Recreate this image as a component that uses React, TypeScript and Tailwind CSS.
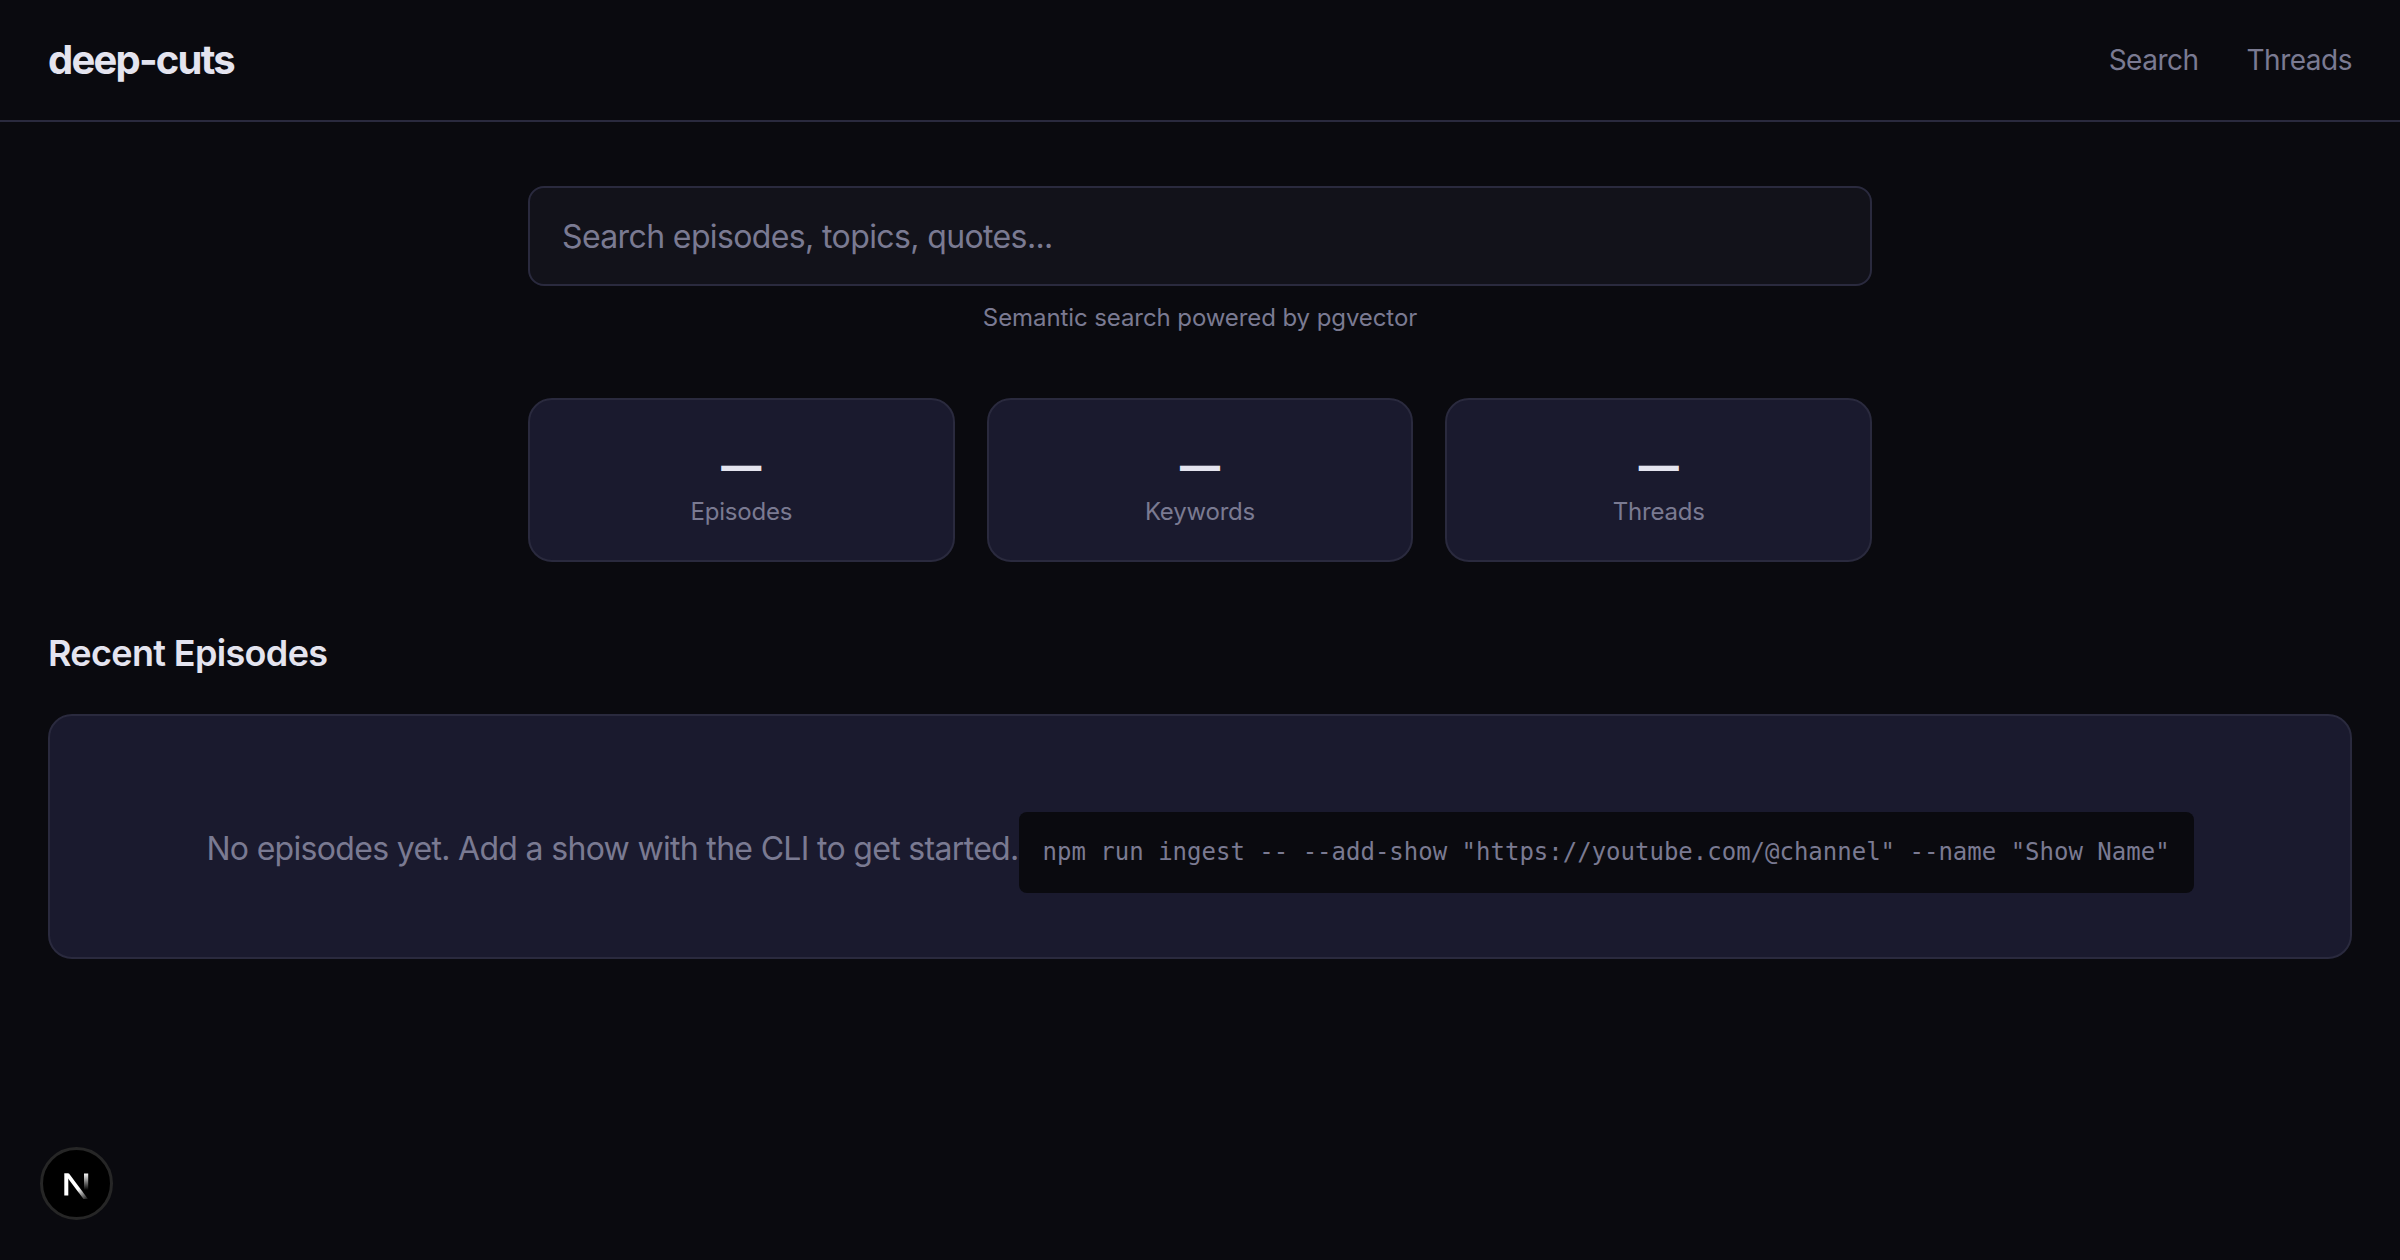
import React from 'react';

const stats = ['Episodes', 'Keywords', 'Threads'];

const NextBadge = () => (
  <div className="fixed left-[40px] bottom-[40px] flex h-[73px] w-[73px] items-center justify-center rounded-full border-[3px] border-[#262626] bg-black">
    <svg width="30" height="30" viewBox="0 0 30 30" fill="none">
      <defs>
        <linearGradient id="nDiag" x1="8" y1="8" x2="26" y2="31" gradientUnits="userSpaceOnUse">
          <stop offset="0.5" stopColor="#fff" />
          <stop offset="1" stopColor="#fff" stopOpacity="0" />
        </linearGradient>
        <linearGradient id="nStem" x1="24" y1="4" x2="24" y2="21" gradientUnits="userSpaceOnUse">
          <stop stopColor="#fff" />
          <stop offset="1" stopColor="#fff" stopOpacity="0" />
        </linearGradient>
      </defs>
      <path d="M2.3 4.5h4v22h-4z" fill="#fff" />
      <path d="M2.3 4.5H7L27.5 32H23z" fill="url(#nDiag)" />
      <path d="M22 4.5h4.2V22H22z" fill="url(#nStem)" />
    </svg>
  </div>
);

export default function App() {
  return (
    <div className="min-h-[1260px] bg-[#0a0a0f] font-['Inter',sans-serif] text-[#e4e4ef]">
      <nav className="flex h-[122px] items-center justify-between border-b-2 border-[#2a2a3e] px-12">
        <div className="text-[40px] font-bold tracking-[-1.8px]">deep-cuts</div>
        <div className="flex gap-12 text-[28px] tracking-[-0.5px] text-[#7a7a92]">
          <span>Search</span>
          <span>Threads</span>
        </div>
      </nav>

      <main className="px-12">
        <div className="mx-auto w-[1344px] pt-16">
          <input
            placeholder="Search episodes, topics, quotes..."
            className="h-[100px] w-full rounded-2xl border-2 border-[#2a2a3e] bg-[#12121a] px-8 text-[32px] tracking-[-0.62px] text-[#e4e4ef] outline-none placeholder:text-[#7a7a92]"
          />
          <p className="mt-[14px] text-center text-[24px] leading-[36px] tracking-[-0.09px] text-[#7a7a92]">
            Semantic search powered by pgvector
          </p>

          <div className="mt-[62px] grid grid-cols-3 gap-8">
            {stats.map((label) => (
              <div
                key={label}
                className="flex h-[164px] flex-col items-center justify-center rounded-3xl border-2 border-[#2a2a3e] bg-[#1a1a2e] pt-[8px]"
              >
                <div className="text-[40px] leading-[56px] font-extrabold">—</div>
                <div className="text-[24px] leading-[36px] tracking-[-0.2px] text-[#7a7a92]">{label}</div>
              </div>
            ))}
          </div>
        </div>

        <h2 className="mt-[64px] text-[36px] leading-[54px] font-semibold tracking-[-0.66px]">Recent Episodes</h2>

        <div className="mt-[34px] rounded-3xl border-2 border-[#2a2a3e] bg-[#1a1a2e] p-16 text-center text-[32px] tracking-[-0.68px] text-[#7a7a92]">
          No episodes yet. Add a show with the CLI to get started.
          <code className="mt-8 inline-block rounded-lg bg-[#0a0a0f] p-6 font-['DejaVu_Sans_Mono',monospace] text-[24px] leading-[33px] tracking-normal">
            npm run ingest -- --add-show "https://youtube.com/@channel" --name "Show Name"
          </code>
        </div>
      </main>

      <NextBadge />
    </div>
  );
}
